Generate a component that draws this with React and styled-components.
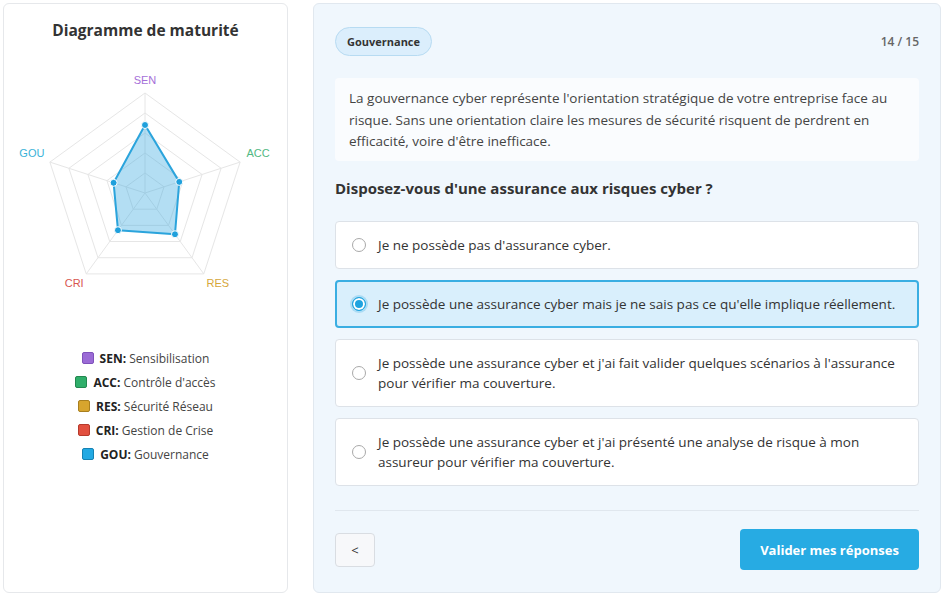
import React from "react";
import styled, { createGlobalStyle } from "styled-components";

const GlobalStyle = createGlobalStyle`
  * { box-sizing: border-box; }
  html, body { margin: 0; padding: 0; background: #ffffff; }
  body {
    font-family: "Open Sans", "Noto Sans", sans-serif;
    color: #333;
  }
`;

const axes = [
  { code: "SEN", name: "Sensibilisation", value: 68, label: "#a56fd8", color: "#9b6bd6", border: "#7f52bb", lx: 0, ly: -12 },
  { code: "ACC", name: "Contrôle d'accès", value: 36, label: "#52b882", color: "#2fae6a", border: "#23874f", lx: 18, ly: -8 },
  { code: "RES", name: "Sécurité Réseau", value: 51, label: "#d6a73a", color: "#d7a52e", border: "#a87f1f", lx: 14, ly: 10 },
  { code: "CRI", name: "Gestion de Crise", value: 46, label: "#d8564f", color: "#e2503f", border: "#b63a2c", lx: -12, ly: 10 },
  { code: "GOU", name: "Gouvernance", value: 33, label: "#3ab2d8", color: "#22a9e3", border: "#1582b3", lx: -18, ly: -8 },
];

const options = [
  "Je ne possède pas d'assurance cyber.",
  "Je possède une assurance cyber mais je ne sais pas ce qu'elle implique réellement.",
  "Je possède une assurance cyber et j'ai fait valider quelques scénarios à l'assurance pour vérifier ma couverture.",
  "Je possède une assurance cyber et j'ai présenté une analyse de risque à mon assureur pour vérifier ma couverture.",
];

const Page = styled.div`
  display: grid;
  grid-template-columns: 285px 628px;
  gap: 25px;
  padding: 3px;
  height: 597px;
`;

const ChartCard = styled.aside`
  background: #fff;
  border: 1px solid #e6e8eb;
  border-radius: 6px;
  padding: 16px 0 0;
  display: flex;
  flex-direction: column;
  align-items: center;
  height: 590px;
`;

const ChartTitle = styled.h2`
  margin: 0;
  font-size: 15.5px;
  font-weight: 700;
  color: #333;
  line-height: 20px;
`;

const RadarSvg = styled.svg`
  display: block;
  margin-top: 21px;
`;

const Legend = styled.ul`
  list-style: none;
  margin: 45px 0 0;
  padding: 0;
  display: flex;
  flex-direction: column;
  align-items: center;
`;

const LegendItem = styled.li`
  display: flex;
  align-items: center;
  gap: 6px;
  height: 24px;
  font-size: 12px;
  color: #444;
  b { color: #222; font-weight: 700; }
`;

const Swatch = styled.span`
  width: 12px;
  height: 12px;
  border-radius: 2px;
  background: ${p => p.$color};
  border: 1px solid ${p => p.$border};
`;

const QuizPanel = styled.main`
  background: #f0f7fd;
  border: 1px solid #e1e8ef;
  border-radius: 6px;
  padding: 23px 21px 22px;
  display: flex;
  flex-direction: column;
  height: 590px;
`;

const TopRow = styled.div`
  display: flex;
  justify-content: space-between;
  align-items: center;
`;

const Badge = styled.span`
  display: inline-flex;
  align-items: center;
  height: 29px;
  padding: 0 11px;
  border-radius: 15px;
  background: #dbeefc;
  border: 1px solid #b7dbf2;
  font-size: 11px;
  font-weight: 700;
  color: #333;
`;

const Counter = styled.span`
  font-size: 12px;
  font-weight: 600;
  color: #666;
`;

const Intro = styled.p`
  margin: 22px 0 0;
  background: #fafcfe;
  border-radius: 4px;
  padding: 10px 14px 8px;
  font-size: 13.5px;
  line-height: 21.5px;
  color: #444;
`;

const Question = styled.h3`
  margin: 16px 0 0;
  font-size: 15px;
  font-weight: 700;
  line-height: 22px;
  color: #333;
`;

const OptionList = styled.div`
  display: flex;
  flex-direction: column;
  gap: 11px;
  margin-top: 22px;
`;

const Option = styled.label`
  display: flex;
  align-items: center;
  gap: 12px;
  min-height: 47px;
  padding: ${p => (p.$selected ? "12px 15px" : "13px 16px")};
  background: ${p => (p.$selected ? "#d9effc" : "#fff")};
  border: ${p => (p.$selected ? "2px solid #3aaee2" : "1px solid #dde2e8")};
  border-radius: 4px;
  font-size: 13.5px;
  line-height: 20px;
  color: #333;
  cursor: pointer;
`;

const Radio = styled.span`
  flex: none;
  width: 14px;
  height: 14px;
  border-radius: 50%;
  border: 1px solid ${p => (p.$selected ? "#1fa3df" : "#a9a9a9")};
  background: ${p => (p.$selected ? "#1fa3df" : "#fff")};
  box-shadow: ${p => (p.$selected ? "inset 0 0 0 2px #fff, 0 0 0 2px rgba(31,163,223,0.25)" : "none")};
`;

const Footer = styled.footer`
  margin-top: auto;
  border-top: 1px solid #e0e7ee;
  padding-top: 18px;
  display: flex;
  justify-content: space-between;
  align-items: center;
`;

const BackButton = styled.button`
  width: 40px;
  height: 34px;
  background: #f7f8fa;
  border: 1px solid #d9dde2;
  border-radius: 4px;
  font-family: inherit;
  font-size: 13px;
  color: #333;
`;

const SubmitButton = styled.button`
  width: 179px;
  height: 41px;
  background: #27abe3;
  border: none;
  border-radius: 4px;
  font-family: inherit;
  font-size: 13px;
  font-weight: 700;
  color: #fff;
`;

const CX = 141;
const CY = 132;
const R = 100;

const point = (i, r) => {
  const a = -Math.PI / 2 + (i * 2 * Math.PI) / 5;
  return [CX + r * Math.cos(a), CY + r * Math.sin(a)];
};

const ring = r => axes.map((_, i) => point(i, r).join(",")).join(" ");

const Radar = () => {
  const data = axes.map((a, i) => point(i, a.value));
  return (
    <RadarSvg width="283" height="240" viewBox="0 0 283 240">
      {[20, 40, 60, 80, 100].map(r => (
        <polygon key={r} points={ring(r)} fill="none" stroke="#e6e6e6" strokeWidth="1" />
      ))}
      {axes.map((_, i) => {
        const [x, y] = point(i, R);
        return <line key={i} x1={CX} y1={CY} x2={x} y2={y} stroke="#e6e6e6" strokeWidth="1" />;
      })}
      <polygon
        points={data.map(p => p.join(",")).join(" ")}
        fill="rgba(54,168,224,0.38)"
        stroke="#2ba4dc"
        strokeWidth="2"
        strokeLinejoin="round"
      />
      {data.map(([x, y], i) => (
        <circle key={i} cx={x} cy={y} r="3.5" fill="#1fa0dc" stroke="#fff" strokeWidth="1" />
      ))}
      {axes.map((a, i) => {
        const [x, y] = point(i, R);
        return (
          <text
            key={a.code}
            x={x + a.lx}
            y={y + a.ly}
            fill={a.label}
            fontSize="11"
            fontFamily="'Liberation Sans', Arial, sans-serif"
            textAnchor="middle"
            dominantBaseline="middle"
          >
            {a.code}
          </text>
        );
      })}
    </RadarSvg>
  );
};

export default function App() {
  return (
    <>
      <GlobalStyle />
      <Page>
        <ChartCard>
          <ChartTitle>Diagramme de maturité</ChartTitle>
          <Radar />
          <Legend>
            {axes.map(a => (
              <LegendItem key={a.code}>
                <Swatch $color={a.color} $border={a.border} />
                <span>
                  <b>{a.code}:</b> {a.name}
                </span>
              </LegendItem>
            ))}
          </Legend>
        </ChartCard>
        <QuizPanel>
          <TopRow>
            <Badge>Gouvernance</Badge>
            <Counter>14 / 15</Counter>
          </TopRow>
          <Intro>
            La gouvernance cyber représente l'orientation stratégique de votre entreprise face au risque. Sans une
            orientation claire les mesures de sécurité risquent de perdrent en efficacité, voire d'être inefficace.
          </Intro>
          <Question>Disposez-vous d'une assurance aux risques cyber ?</Question>
          <OptionList>
            {options.map((text, i) => (
              <Option key={i} $selected={i === 1}>
                <Radio $selected={i === 1} />
                <span>{text}</span>
              </Option>
            ))}
          </OptionList>
          <Footer>
            <BackButton>&lt;</BackButton>
            <SubmitButton>Valider mes réponses</SubmitButton>
          </Footer>
        </QuizPanel>
      </Page>
    </>
  );
}
